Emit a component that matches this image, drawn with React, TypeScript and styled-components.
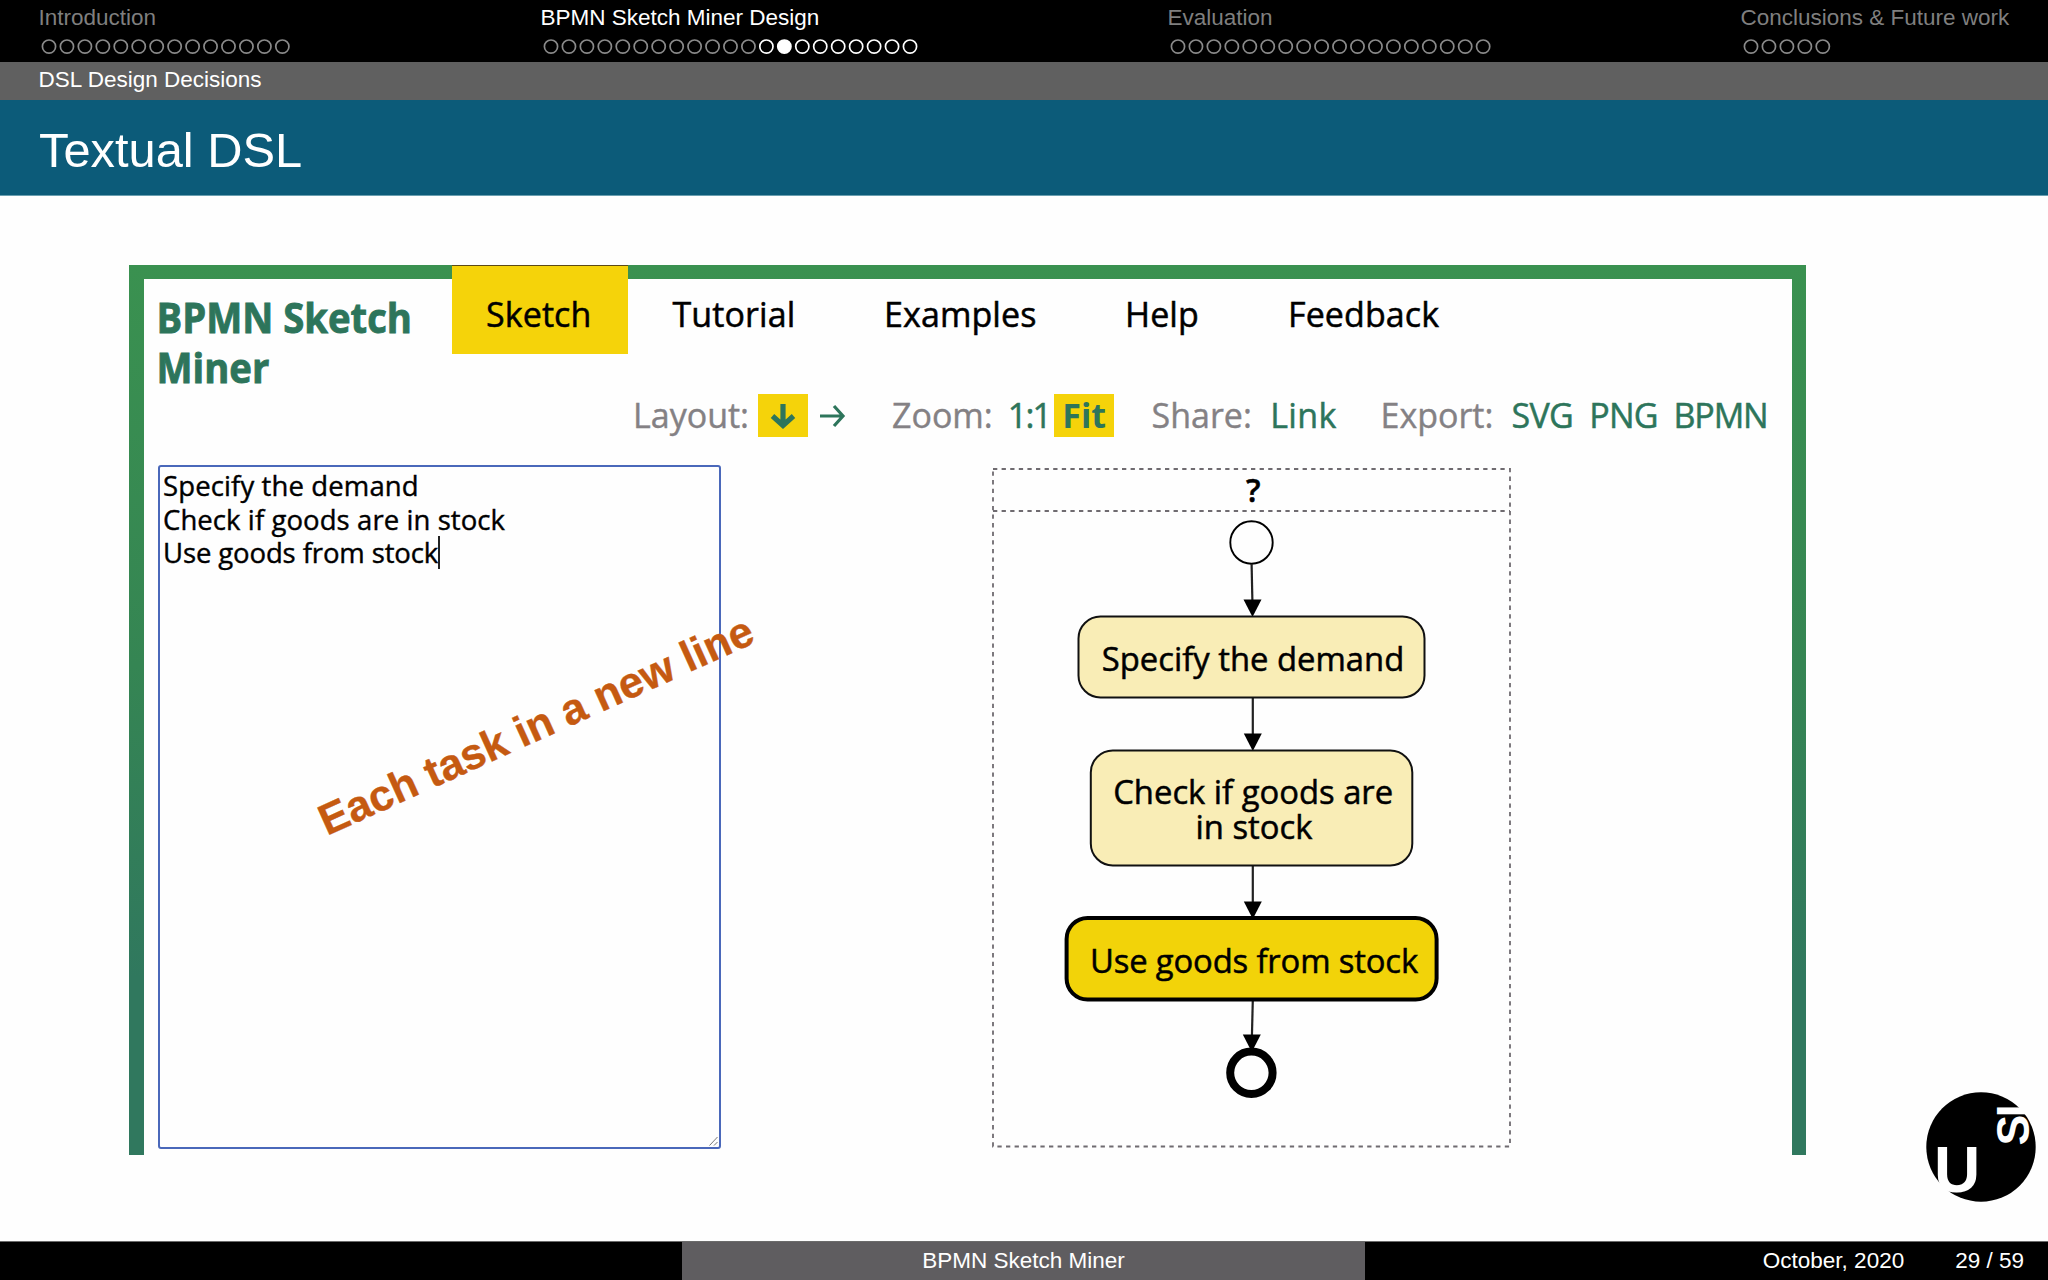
import React from 'react';
import styled, { createGlobalStyle } from 'styled-components';

const sans = `"Liberation Sans", Arial, sans-serif`;
const humanist = `"Open Sans", "Noto Sans", sans-serif`;
const green = '#2d755b';
const yellow = '#f5d30a';

const GlobalStyle = createGlobalStyle`
  *, *::before, *::after { box-sizing: border-box; }
  body { margin: 0; background: #fefefe; overflow: hidden; }
`;

const Slide = styled.div`
  position: relative;
  display: flex;
  flex-direction: column;
  width: 2048px;
  height: 1280px;
  background: #fefefe;
  font-family: ${sans};
  color: #fff;
`;

/* ---------- slide header ---------- */

const SectionBar = styled.header`
  display: grid;
  grid-template-columns: 502px 627px 573px auto;
  height: 62px;
  padding: 5px 0 0 38.5px;
  background: #000;
`;

const Section = styled.div<{ $active?: boolean }>`
  color: ${p => (p.$active ? '#fff' : '#7f7f7f')};
  font-size: 22.5px;
  line-height: 26px;
  white-space: nowrap;
`;

const Dots = styled.svg`
  display: block;
  margin: 7px 0 0 1.5px;
`;

const SubsectionBar = styled.div`
  height: 38px;
  padding: 5px 0 0 38.5px;
  background: #606060;
  font-size: 22.5px;
  line-height: 26px;
`;

const TitleBar = styled.h1`
  height: 96px;
  margin: 0;
  padding: 21.5px 0 0 39px;
  background: #0c5b79;
  border-bottom: 1px solid #6a9fb0;
  font-size: 48.8px;
  font-weight: 400;
  line-height: 56px;
`;

/* ---------- embedded application ---------- */

const Body = styled.main`
  flex: 1;
  padding: 69px 0 0 129px;
`;

const AppFrame = styled.section`
  position: relative;
  width: 1677px;
  height: 890px;
  padding: 14px 14.5px 0 14.5px;
  background: linear-gradient(#3a9150, #358553 45%, #30785e 80%, #30785e);
  font-family: ${humanist};
`;

const AppPage = styled.div`
  display: flex;
  flex-direction: column;
  height: 100%;
  padding-left: 14px;
  background: #fefefe;
`;

const AppHeader = styled.div`
  display: flex;
  height: 115px;
`;

const Brand = styled.div`
  width: 294px;
  padding-top: 13px;
  color: ${green};
  font-size: 42px;
  font-weight: 700;
  line-height: 50px;
  -webkit-text-stroke: 0.9px ${green};
  transform: translateX(-1.5px) scaleX(0.91);
  transform-origin: 0 0;
`;

const Nav = styled.nav`
  display: flex;
  gap: 10px;
  height: 88px;
  margin-top: -13px;
`;

const Tab = styled.a<{ $width: number; $active?: boolean }>`
  width: ${p => p.$width}px;
  padding: 25px 0 0 34.5px;
  background: ${p => (p.$active ? yellow : 'transparent')};
  box-shadow: ${p => (p.$active ? '0 -1px 0 #5b4a18' : 'none')};
  color: #000;
  font-size: 34px;
  letter-spacing: 0.1px;
  line-height: 46px;
  white-space: nowrap;
  -webkit-text-stroke: 0.5px #000;
`;

const Toolbar = styled.div`
  display: grid;
  grid-template-columns: 259px 259.5px 229px auto;
  height: 71px;
  margin-left: 475.5px;
  font-size: 34px;
  line-height: 43px;
  white-space: nowrap;
`;

const ToolGroup = styled.div<{ $gap: number }>`
  display: flex;
  align-items: flex-start;
  gap: ${p => p.$gap}px;
`;

const ToolLabel = styled.span<{ $after?: number }>`
  margin-right: ${p => p.$after ?? 0}px;
  color: #848184;
  -webkit-text-stroke: 0.4px #848184;
`;

const ToolLink = styled.a<{ $tracking?: number }>`
  color: ${green};
  letter-spacing: ${p => p.$tracking ?? 0}px;
  -webkit-text-stroke: 0.5px ${green};
`;

const ToolOption = styled.a<{ $width: number; $selected?: boolean }>`
  display: flex;
  justify-content: center;
  width: ${p => p.$width}px;
  height: 42.5px;
  background: ${p => (p.$selected ? yellow : 'transparent')};
  color: ${green};
  font-weight: 700;
`;

const Workspace = styled.div`
  display: flex;
  gap: 270px;
`;

const Editor = styled.div`
  position: relative;
  width: 563px;
  height: 684px;
  padding: 2px 3.5px;
  border: 2px solid #4a68ba;
  border-radius: 3px;
  color: #000;
  font-size: 27.5px;
  line-height: 33.5px;
  -webkit-text-stroke: 0.4px #000;
`;

const Line = styled.div<{ $tracking?: number }>`
  display: flex;
  align-items: center;
  height: 33.5px;
  letter-spacing: ${p => p.$tracking ?? 0}px;
  white-space: nowrap;
`;

const Caret = styled.span`
  width: 1.5px;
  height: 33px;
  background: #222;
`;

const ResizeGrip = styled.svg`
  position: absolute;
  right: 1px;
  bottom: 1px;
`;

const Diagram = styled.svg`
  display: block;
  margin-top: 3px;
  font-family: ${humanist};
  font-size: 32.8px;
  text-anchor: middle;
`;

const DiagramText = styled.text`
  stroke: #000;
  stroke-width: 0.5px;
`;

const Annotation = styled.div`
  position: absolute;
  left: 197.5px;
  top: 532px;
  color: #c55a11;
  font: 700 43.3px/48px ${sans};
  white-space: nowrap;
  -webkit-text-stroke: 0.4px #c55a11;
  transform: rotate(-24.3deg);
  transform-origin: 0 39px;
`;

const Logo = styled.svg`
  position: absolute;
  left: 1921px;
  top: 1087px;
`;

/* ---------- slide footer ---------- */

const Footer = styled.footer`
  display: grid;
  grid-template-columns: 682px 683px 683px;
  height: 39px;
  border-top: 1px solid #6b6b6b;
  font-size: 22.5px;
  line-height: 26px;
`;

const FooterCell = styled.div<{ $tone: string; $align?: string }>`
  display: flex;
  justify-content: ${p => p.$align ?? 'center'};
  gap: 51px;
  padding: 6px ${p => (p.$align ? 24 : 0)}px 0 0;
  background: ${p => p.$tone};
`;

const MUTED = '#8a8a8a';

function Progress({ count, brightFrom = count, current = -1 }: { count: number; brightFrom?: number; current?: number }) {
  return (
    <Dots width={count * 17.95 + 2} height={18} fill="none" strokeWidth={1.7}>
      {Array.from({ length: count }, (_, i) => (
        <circle
          key={i}
          cx={9 + i * 17.95}
          cy={8.6}
          r={6.6}
          stroke={i >= brightFrom ? '#fff' : MUTED}
          fill={i === current ? '#fff' : 'none'}
        />
      ))}
    </Dots>
  );
}

function Arrow({ x1, y1, x2, y2 }: { x1: number; y1: number; x2: number; y2: number }) {
  return (
    <g>
      <line x1={x1} y1={y1} x2={x2} y2={y2 - 10} stroke="#222" strokeWidth={2.2} />
      <path d={`M${x2 - 9} ${y2 - 16.5}H${x2 + 9}L${x2} ${y2 + 1}Z`} fill="#000" />
    </g>
  );
}

function ProcessDiagram() {
  return (
    <Diagram width={522} height={684} viewBox="991 468 522 684">
      <g fill="none" stroke="#6f6b70" strokeWidth={1.8} strokeDasharray="4.3 4.3">
        <rect x={993} y={469} width={517} height={677.5} />
        <path d="M993 511H1510" />
      </g>
      <DiagramText x={1253.3} y={501.7} fontSize={32} fontWeight={600}>?</DiagramText>
      <circle cx={1251.5} cy={542.5} r={21.2} fill="#fefefe" stroke="#000" strokeWidth={1.9} />
      <Arrow x1={1251.6} y1={564} x2={1252.5} y2={616} />
      <Arrow x1={1252.8} y1={698} x2={1252.8} y2={750} />
      <Arrow x1={1252.8} y1={866} x2={1252.8} y2={918} />
      <Arrow x1={1252.8} y1={1000} x2={1251.8} y2={1051} />
      <g fill="#f9edb6" stroke="#111" strokeWidth={2}>
        <rect x={1078.5} y={616.5} width={346} height={81} rx={22} />
        <rect x={1090.8} y={750.5} width={321.5} height={115} rx={22} />
      </g>
      <rect x={1066.6} y={918} width={370} height={81.5} rx={21} fill="#f2d309" stroke="#000" strokeWidth={4} />
      <circle cx={1251.4} cy={1072.8} r={21.2} fill="#fefefe" stroke="#000" strokeWidth={8} />
      <DiagramText x={1253} y={671}>Specify the demand</DiagramText>
      <DiagramText y={804}>
        <tspan x={1253.2}>Check if goods are</tspan>
        <tspan x={1254} dy={34.7}>in stock</tspan>
      </DiagramText>
      <DiagramText x={1254} y={972.7} letterSpacing={-0.15}>Use goods from stock</DiagramText>
    </Diagram>
  );
}

export default function App() {
  return (
    <Slide>
      <GlobalStyle />
      <SectionBar>
        <Section>Introduction<Progress count={14} /></Section>
        <Section $active>BPMN Sketch Miner Design<Progress count={21} brightFrom={12} current={13} /></Section>
        <Section>Evaluation<Progress count={18} /></Section>
        <Section>Conclusions &amp; Future work<Progress count={5} /></Section>
      </SectionBar>
      <SubsectionBar>DSL Design Decisions</SubsectionBar>
      <TitleBar>Textual DSL</TitleBar>

      <Body>
        <AppFrame>
          <AppPage>
            <AppHeader>
              <Brand>BPMN Sketch Miner</Brand>
              <Nav>
                <Tab $width={176.5} $active>Sketch</Tab>
                <Tab $width={201.5}>Tutorial</Tab>
                <Tab $width={231}>Examples</Tab>
                <Tab $width={153}>Help</Tab>
                <Tab $width={230}>Feedback</Tab>
              </Nav>
            </AppHeader>
            <Toolbar>
              <ToolGroup $gap={0}>
                <ToolLabel $after={9}>Layout:</ToolLabel>
                <ToolOption $width={49.5} $selected>
                  <svg width={50} height={42} fill="none" stroke={green} strokeWidth={5.2}>
                    <path d="M25 10V31M14.5 22L25 31.5L35.5 22" />
                  </svg>
                </ToolOption>
                <ToolOption $width={48}>
                  <svg width={48} height={42} fill="none" stroke={green} strokeWidth={3.2}>
                    <path d="M12 22H35M26 12L35 22L26 32" />
                  </svg>
                </ToolOption>
              </ToolGroup>
              <ToolGroup $gap={4}>
                <ToolLabel $after={11}>Zoom:</ToolLabel>
                <ToolLink $tracking={-1.8}>1:1</ToolLink>
                <ToolOption $width={60} $selected>Fit</ToolOption>
              </ToolGroup>
              <ToolGroup $gap={18.5}>
                <ToolLabel>Share:</ToolLabel>
                <ToolLink $tracking={0.3}>Link</ToolLink>
              </ToolGroup>
              <ToolGroup $gap={16}>
                <ToolLabel $after={2}>Export:</ToolLabel>
                <ToolLink $tracking={-0.6}>SVG</ToolLink>
                <ToolLink $tracking={-0.8}>PNG</ToolLink>
                <ToolLink $tracking={-1.2}>BPMN</ToolLink>
              </ToolGroup>
            </Toolbar>
            <Workspace>
              <Editor>
                <Line $tracking={0.12}>Specify the demand</Line>
                <Line $tracking={0.08}>Check if goods are in stock</Line>
                <Line $tracking={-0.12}>Use goods from stock<Caret /></Line>
                <ResizeGrip width={9} height={10} stroke="#777" strokeWidth={1}>
                  <path d="M0.5 9.5L8.5 1M5 9.5L8.5 6" />
                </ResizeGrip>
              </Editor>
              <ProcessDiagram />
            </Workspace>
          </AppPage>
          <Annotation>Each task in a new line</Annotation>
        </AppFrame>
      </Body>

      <Footer>
        <FooterCell $tone="#000" />
        <FooterCell $tone="#5f5d60">BPMN Sketch Miner</FooterCell>
        <FooterCell $tone="#000" $align="flex-end">
          <span>October, 2020</span>
          <span>29 / 59</span>
        </FooterCell>
      </Footer>

      <Logo width={120} height={120} fontFamily={sans} fontWeight={700} fill="#fefefe">
        <circle cx={60} cy={60} r={54.7} fill="#000" />
        <text x={13} y={104.6} fontSize={64}>U</text>
        <text transform="translate(107.7 58.5) rotate(-90)" fontSize={46} letterSpacing={-2.5}>SI</text>
      </Logo>
    </Slide>
  );
}
